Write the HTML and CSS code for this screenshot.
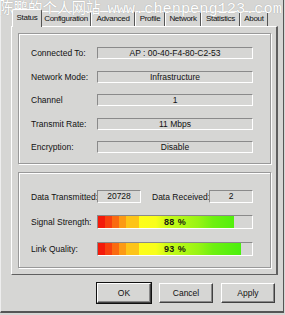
FILE: index.html
```html
<!DOCTYPE html>
<html lang="en">
<head>
  <meta charset="UTF-8" />
  <title>Status</title>
  <link rel="stylesheet" href="styles.css">
</head>
<body>
  <div class="window">
    <div class="tabs">
      <div class="tab active" style="width: 30px">Status</div>
      <div class="tab" style="width: 50px">Configuration</div>
      <div class="tab" style="width: 44px">Advanced</div>
      <div class="tab" style="width: 30px">Profile</div>
      <div class="tab" style="width: 36px">Network</div>
      <div class="tab" style="width: 39px">Statistics</div>
      <div class="tab" style="width: 28px">About</div>
    </div>

    <div class="panel">
      <div class="group info">
        <span class="label">Connected To:</span>
        <span class="field">AP : 00-40-F4-80-C2-53</span>
        <span class="label">Network Mode:</span>
        <span class="field">Infrastructure</span>
        <span class="label">Channel</span>
        <span class="field">1</span>
        <span class="label">Transmit Rate:</span>
        <span class="field">11 Mbps</span>
        <span class="label">Encryption:</span>
        <span class="field">Disable</span>
      </div>

      <div class="group stats">
        <div class="data-row">
          <span class="label first">Data Transmitted:</span>
          <span class="field small">20728</span>
          <span class="label second">Data Received:</span>
          <span class="field small">2</span>
        </div>
        <div class="bar-row">
          <span class="label">Signal Strength:</span>
          <div class="bar">
            <div class="fill" style="width: 88%"></div>
            <span class="pct">88 %</span>
          </div>
        </div>
        <div class="bar-row">
          <span class="label">Link Quality:</span>
          <div class="bar">
            <div class="fill" style="width: 93%"></div>
            <span class="pct">93 %</span>
          </div>
        </div>
      </div>
    </div>

    <div class="buttons">
      <button class="btn default">OK</button>
      <button class="btn">Cancel</button>
      <button class="btn">Apply</button>
    </div>
  </div>

  <div class="watermark"><span class="cn">陈鹏的个人网站</span><span class="url">www.chenpeng123.com</span></div>
</body>
</html>
```

FILE: styles.css
```css
body {
  margin: 0;
  width: 285px;
  height: 315px;
  background: #d6d6d4;
  font-family: 'Liberation Sans', Arial, sans-serif;
  font-size: 8.5px;
  color: #111;
  overflow: hidden;
  position: relative;
}

.window {
  box-sizing: border-box;
  width: 284px;
  height: 313px;
  padding: 10px 7px 0 10px;
  border-right: 1px solid #555;
  border-bottom: 2px solid #555;
  border-left: 1px solid #eee;
}

.tabs {
  display: flex;
  height: 16px;
  padding-left: 3px;
  align-items: flex-end;
}

.tab {
  box-sizing: border-box;
  flex: none;
  height: 15px;
  border-top: 1px solid #fff;
  border-left: 1px solid #fff;
  border-right: 1px solid #555;
  border-radius: 2px 2px 0 0;
  font-size: 8px;
  letter-spacing: -0.3px;
  line-height: 14px;
  text-align: center;
  white-space: nowrap;
}

.tab.active {
  height: 18px;
  margin: 0 -1px -1px -2px;
  background: #d6d6d4;
  position: relative;
  z-index: 1;
  line-height: 16px;
}

.panel {
  box-sizing: border-box;
  width: 267px;
  height: 249px;
  padding: 6px 6px 0 6px;
  border-top: 1px solid #fff;
  border-left: 1px solid #fff;
  border-right: 2px solid #606060;
  border-bottom: 1px solid #606060;
  display: flex;
  flex-direction: column;
  gap: 8px;
}

.group {
  box-sizing: border-box;
  border: 1px solid #999;
  box-shadow: inset 1px 1px 0 #fff, 1px 1px 0 #fff;
  width: 253px;
}

.info {
  height: 131px;
  padding: 13px 17px 0 12px;
  display: grid;
  grid-template-columns: 66px 156px;
  grid-auto-rows: 12px;
  row-gap: 11.5px;
  align-items: center;
}

.label {
  white-space: nowrap;
}

.field {
  box-sizing: border-box;
  height: 12px;
  border-top: 1px solid #8a8a8a;
  border-left: 1px solid #8a8a8a;
  border-bottom: 1px solid #fff;
  border-right: 1px solid #fff;
  text-align: center;
  line-height: 10px;
}

.stats {
  height: 96px;
  padding: 17px 17px 0 12px;
  display: flex;
  flex-direction: column;
  gap: 12px;
}

.data-row {
  display: flex;
  align-items: center;
  height: 13px;
}

.data-row .first {
  width: 66px;
}

.data-row .second {
  width: 57px;
  padding-left: 11px;
}

.field.small {
  width: 44px;
  height: 13px;
  line-height: 11px;
}

.bar-row {
  display: flex;
  align-items: center;
  height: 14px;
}

.bar-row .label {
  width: 66px;
}

.bar {
  box-sizing: border-box;
  width: 156px;
  height: 14px;
  border-top: 1px solid #8a8a8a;
  border-left: 1px solid #8a8a8a;
  border-bottom: 1px solid #fff;
  border-right: 1px solid #fff;
  position: relative;
}

.bar-row + .bar-row {
  margin-top: 1px;
}

.fill {
  height: 100%;
  background: linear-gradient(to right,
    #f41a0a 0, #f41a0a 7px,
    #f8400e 7px, #f8400e 14px,
    #fa6a10 14px, #fa6a10 21px,
    #fc9a14 21px, #fc9a14 28px,
    #fdc418 28px, #fdc418 41px,
    #fefd1a 41px, #f8fe1a 58px,
    #c8fa18 70px, #98f414 100px,
    #6ef010 115px, #40f00c 150px);
  background-size: 154px 100%;
}

.pct {
  position: absolute;
  top: 0;
  left: 0;
  right: 0;
  text-align: center;
  font-size: 9px;
  font-weight: bold;
  line-height: 12px;
  color: #1a1a10;
  letter-spacing: 0.4px;
}

.buttons {
  display: flex;
  justify-content: flex-end;
  gap: 8px;
  margin-top: 8px;
  padding-right: 1px;
}

.btn {
  box-sizing: border-box;
  width: 54px;
  height: 20px;
  padding: 0;
  background: #d6d6d4;
  font-family: 'Liberation Sans', Arial, sans-serif;
  font-size: 8.5px;
  color: #111;
  border: 1px solid;
  border-color: #fff #404040 #404040 #fff;
  box-shadow: inset -1px -1px 0 #888;
}

.btn.default {
  outline: 1px solid #111;
}

.watermark {
  position: absolute;
  top: -2px;
  left: -1px;
  display: flex;
  align-items: baseline;
  color: #fff;
  white-space: nowrap;
  text-shadow: 0 0 1px #999;
}

.cn {
  font-family: 'Noto Sans CJK SC', 'Noto Sans CJK JP', sans-serif;
  font-size: 14.5px;
  line-height: 17px;
}

.url {
  margin-left: 7px;
  font-family: 'Liberation Mono', monospace;
  font-size: 15.3px;
  line-height: 17px;
}
```
